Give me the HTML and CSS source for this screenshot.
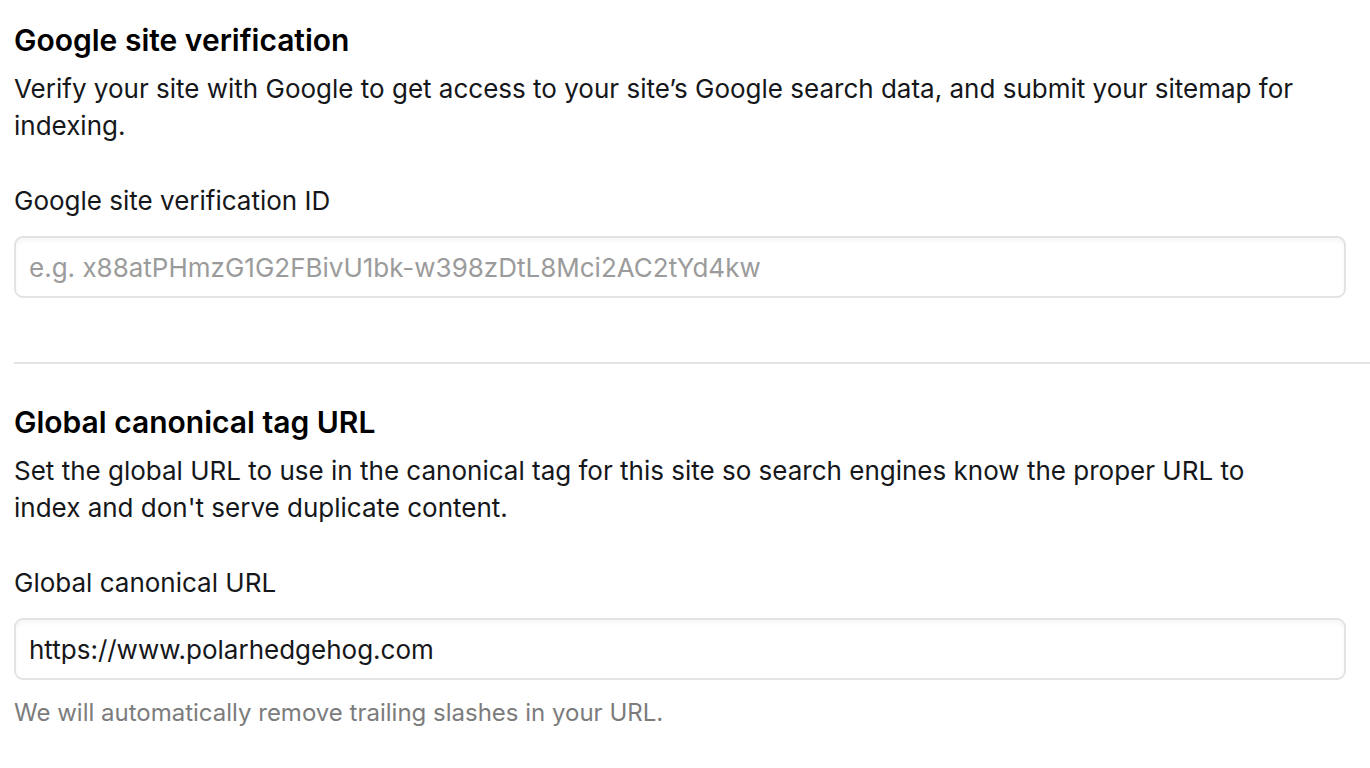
FILE: index.html
```html
<!DOCTYPE html>
<html lang="en">
<head>
<meta charset="utf-8">
<title>Settings</title>
<link rel="stylesheet" href="styles.css">
</head>
<body>
<main class="page">
  <section class="section">
    <h2 class="title">Google site verification</h2>
    <p class="desc">Verify your site with Google to get access to your site’s Google search data, and submit your sitemap for indexing.</p>
    <label class="label" for="gsv">Google site verification ID</label>
    <input class="field" id="gsv" type="text" placeholder="e.g. x88atPHmzG1G2FBivU1bk-w398zDtL8Mci2AC2tYd4kw">
  </section>
  <hr class="divider">
  <section class="section">
    <h2 class="title">Global canonical tag URL</h2>
    <p class="desc">Set the global URL to use in the canonical tag for this site so search engines know the proper URL to index and don't serve duplicate content.</p>
    <label class="label" for="gcu">Global canonical URL</label>
    <input class="field" id="gcu" type="text" value="https://www.polarhedgehog.com">
    <p class="hint">We will automatically remove trailing slashes in your URL.</p>
  </section>
</main>
</body>
</html>
```

FILE: styles.css
```css
html, body {
  margin: 0;
  padding: 0;
  background: #ffffff;
}
body {
  font-family: Inter, "Noto Sans", sans-serif;
  color: #15171a;
}
.page {
  width: 1332px;
  padding: 0 0 0 14px;
}
.section {
  display: flex;
  flex-direction: column;
}
.title {
  margin: 22px 0 0;
  font-size: 30px;
  line-height: 36px;
  font-weight: 600;
  color: #000;
}
.desc {
  margin: 12px 0 0;
  max-width: 1292px;
  font-size: 26px;
  line-height: 37px;
  color: #15171a;
}
.label {
  margin-top: 39px;
  font-size: 26px;
  line-height: 36px;
  color: #15171a;
}
.field {
  margin-top: 17px;
  box-sizing: border-box;
  width: 1332px;
  height: 62px;
  padding: 0 13px;
  border: 2px solid #e3e3e3;
  border-radius: 9px;
  box-shadow: inset 0 3px 4px rgba(0,0,0,0.035);
  background: #fff;
  font-family: Inter, "Noto Sans", sans-serif;
  font-size: 26px;
  color: #15171a;
  outline: none;
}
.field::placeholder {
  color: #9b9b9b;
}
.divider {
  margin: 64px -24px 18px 0;
  border: 0;
  height: 2px;
  background: #e3e3e3;
}
.hint {
  margin: 16px 0 0;
  font-size: 24px;
  line-height: 34px;
  color: #7c7c7c;
}
```
